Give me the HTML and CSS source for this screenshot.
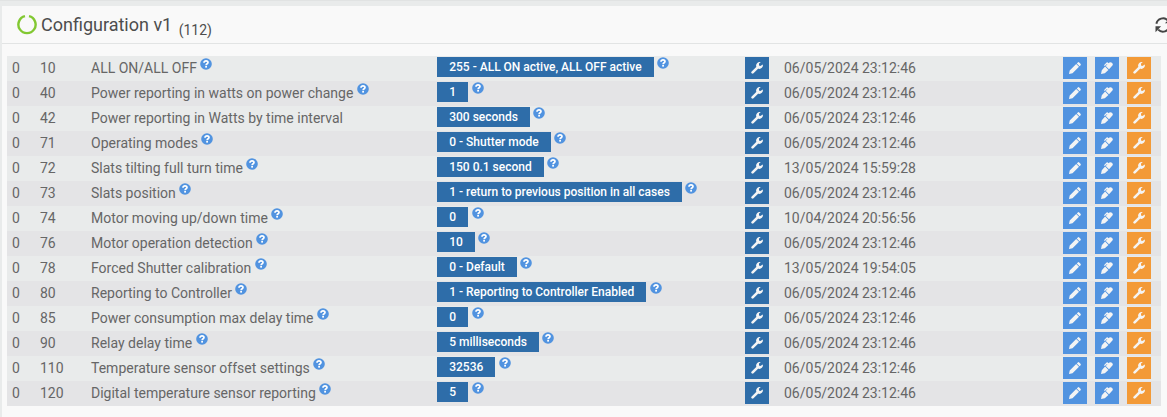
FILE: index.html
```html
<!DOCTYPE html>
<html lang="en">
<head>
<meta charset="utf-8">
<meta name="viewport" content="width=device-width, initial-scale=1.0">
<title>Configuration</title>
<link rel="stylesheet" href="styles.css">
</head>
<body>

  <svg class="sprite" aria-hidden="true">
    <symbol id="icon-help" viewBox="0 0 12 12">
      <circle cx="6" cy="6" r="5.8" fill="#5193e0"/>
      <path d="M4 4.7C4 3.4 4.8 2.9 6 2.9S8 3.6 8 4.6C8 5.8 6.1 5.8 6.1 7.2" fill="none" stroke="#fff" stroke-width="1.7"/>
      <rect x="5.2" y="8" width="1.8" height="1.6" fill="#fff"/>
    </symbol>
    <symbol id="icon-wrench" viewBox="0 0 12 12">
      <path d="M1.6 10.4L6.9 5.1" stroke="currentColor" stroke-width="2.6" stroke-linecap="round"/>
      <path d="M9.8.3A3.5 3.5 0 0 0 5.2 4.4L7.6 6.8A3.5 3.5 0 0 0 11.8 2.6L9.4 4 8 3.4V1.5Z" fill="currentColor"/>
    </symbol>
    <symbol id="icon-pencil" viewBox="0 0 12 12">
      <path d="M0 12L.7 8.5 7.2 2 10 4.8 3.5 11.3ZM7.8 1.4L8.8.4Q9.5-.2 10.2.5L11.5 1.8Q12.2 2.5 11.6 3.2L10.6 4.2Z" fill="currentColor"/>
    </symbol>
    <symbol id="icon-pen" viewBox="0 0 12 12">
      <path d="M0 12L.8 8.2 4.1 4.6 7.4 7.9 3.8 11.2ZM4.7 4L6.4 2.3 6 1.9 3.8 4.1 3 3.3 5.6.6Q6.2.1 6.8.6L7.5 1.3 8.4.6Q9.8-.4 11.1.9 12.4 2.2 11.4 3.6L8 7.3Z" fill="currentColor"/>
    </symbol>
  </svg>

  <div class="panel">
    <header class="panel-header">
      <svg class="status-ring" viewBox="0 0 20 20" aria-hidden="true">
        <path d="M8 1.2A8.6 8.6 0 1 0 12 1.2" fill="none" stroke="#82c832" stroke-width="2.4"/>
      </svg>
      <h1 class="panel-title">Configuration v1 <sub>(112)</sub></h1>
      <button class="refresh" aria-label="Refresh">
        <svg viewBox="0 0 16 16">
          <path d="M1.4 6.8A6.7 6.7 0 0 1 12.8 3.4M14.6 9.2A6.7 6.7 0 0 1 3.2 12.6" fill="none" stroke="currentColor" stroke-width="2"/>
          <path d="M15.5 .7V6.3H9.9ZM.5 15.3V9.2H6.1Z" fill="currentColor"/>
        </svg>
      </button>
    </header>

    <table class="config">
      <colgroup>
        <col class="col-instance">
        <col class="col-number">
        <col class="col-name">
        <col>
        <col class="col-set">
        <col class="col-date">
        <col class="col-actions">
      </colgroup>
      <tbody id="config-rows"></tbody>
    </table>
  </div>

  <script>
    const params = [
      { id: 10, name: "ALL ON/ALL OFF", value: "255 - ALL ON active, ALL OFF active", date: "06/05/2024 23:12:46", help: true },
      { id: 40, name: "Power reporting in watts on power change", value: "1", date: "06/05/2024 23:12:46", help: true },
      { id: 42, name: "Power reporting in Watts by time interval", value: "300 seconds", date: "06/05/2024 23:12:46", help: false },
      { id: 71, name: "Operating modes", value: "0 - Shutter mode", date: "06/05/2024 23:12:46", help: true },
      { id: 72, name: "Slats tilting full turn time", value: "150 0.1 second", date: "13/05/2024 15:59:28", help: true },
      { id: 73, name: "Slats position", value: "1 - return to previous position in all cases", date: "06/05/2024 23:12:46", help: true },
      { id: 74, name: "Motor moving up/down time", value: "0", date: "10/04/2024 20:56:56", help: true },
      { id: 76, name: "Motor operation detection", value: "10", date: "06/05/2024 23:12:46", help: true },
      { id: 78, name: "Forced Shutter calibration", value: "0 - Default", date: "13/05/2024 19:54:05", help: true },
      { id: 80, name: "Reporting to Controller", value: "1 - Reporting to Controller Enabled", date: "06/05/2024 23:12:46", help: true },
      { id: 85, name: "Power consumption max delay time", value: "0", date: "06/05/2024 23:12:46", help: true },
      { id: 90, name: "Relay delay time", value: "5 milliseconds", date: "06/05/2024 23:12:46", help: true },
      { id: 110, name: "Temperature sensor offset settings", value: "32536", date: "06/05/2024 23:12:46", help: true },
      { id: 120, name: "Digital temperature sensor reporting", value: "5", date: "06/05/2024 23:12:46", help: true }
    ];

    const help = '<svg class="help"><use href="#icon-help"/></svg>';

    const button = (type, icon, label) =>
      `<button class="btn ${type}" aria-label="${label}"><svg><use href="#icon-${icon}"/></svg></button>`;

    document.getElementById('config-rows').innerHTML = params.map(p => `
      <tr>
        <td>0</td>
        <td>${p.id}</td>
        <td>${p.name}${p.help ? ' ' + help : ''}</td>
        <td><span class="value">${p.value}</span> ${help}</td>
        <td>${button('btn-primary', 'wrench', 'Set ' + p.name)}</td>
        <td>${p.date}</td>
        <td><div class="actions">
          ${button('btn-info', 'pencil', 'Edit ' + p.name)}
          ${button('btn-info', 'pen', 'Edit raw value of ' + p.name)}
          ${button('btn-warning', 'wrench', 'Advanced ' + p.name)}
        </div></td>
      </tr>`).join('');
  </script>
</body>
</html>
```
FILE: styles.css
```css
* {
  box-sizing: border-box;
}

body {
  margin: 0;
  background-color: #e9ebeb;
  border-top: 1px solid #e1e3e3;
  font-family: Roboto, Arial, sans-serif;
  font-size: 14px;
  color: #666;
  overflow-x: hidden;
}

.sprite {
  display: none;
}

.panel {
  margin: 5px 0 0 2px;
  padding-bottom: 12px;
  min-height: 100vh;
  background-color: #f9f9f9;
}

.panel-header {
  display: flex;
  align-items: center;
  height: 38px;
  padding-left: 15px;
  margin-right: -4px;
  border-bottom: 1px solid #e2e4e4;
}

.status-ring {
  width: 20px;
  height: 20px;
  margin-right: 4px;
}

.panel-title {
  margin: 0;
  font-size: 18px;
  font-weight: 400;
  line-height: 24px;
  color: #4d4d4d;
}

.panel-title sub {
  margin-left: 2px;
  font-size: 14px;
  line-height: 0;
}

.refresh {
  width: 16px;
  height: 16px;
  margin-left: auto;
  padding: 0;
  border: none;
  background: none;
  color: #444;
  cursor: pointer;
}

.refresh svg {
  display: block;
}

.config {
  width: calc(100% - 11px);
  margin: 12px 6px 0 5px;
  table-layout: fixed;
  border-collapse: collapse;
}

.config tr {
  height: 25px;
  background-color: #e9ebeb;
}

.config tr:nth-child(even) {
  background-color: #e4e4e6;
}

.config td {
  padding: 1px 5px 0;
  line-height: 22px;
  vertical-align: top;
  white-space: nowrap;
}

.col-instance {
  width: 28px;
}

.col-number {
  width: 51px;
}

.col-name {
  width: 30%;
}

.col-set {
  width: 39px;
}

.col-date {
  width: 279px;
}

.col-actions {
  width: 103px;
}

.help {
  width: 12px;
  height: 12px;
  vertical-align: 3px;
}

.value {
  display: inline-block;
  padding: 0 12px;
  background-color: #2e6da9;
  color: #fff;
  font-size: 12px;
  font-weight: 500;
  line-height: 20px;
}

.value,
.value + .help {
  vertical-align: top;
}

.btn {
  display: flex;
  align-items: center;
  justify-content: center;
  width: 24px;
  height: 22px;
  padding: 0;
  border: none;
  color: #f4f4f4;
  cursor: pointer;
}

.btn svg {
  width: 12px;
  height: 12px;
}

.btn-primary {
  background-color: #2e6da9;
}

.btn-info {
  background-color: #5193e0;
}

.btn-warning {
  background-color: #f39a37;
}

.actions {
  display: flex;
  gap: 8px;
}
```
